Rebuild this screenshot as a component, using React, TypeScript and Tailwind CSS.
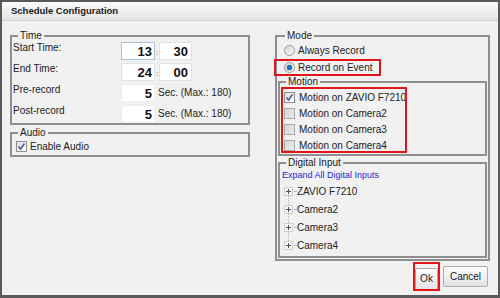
import React from 'react';

const Check = ({ checked = false, disabled = false }: { checked?: boolean; disabled?: boolean }) => (
  <span
    className={`inline-flex items-center justify-center w-[11px] h-[11px] border shrink-0 ${
      disabled
        ? 'border-[#a9a9a9] bg-gradient-to-br from-[#d4d4d4] to-[#ececec]'
        : 'border-[#8e8f8f] bg-gradient-to-br from-[#dcdcdc] to-[#ffffff]'
    }`}
  >
    {checked && (
      <svg width="9" height="9" viewBox="0 0 9 9">
        <path d="M1.5 4.5 L3.5 7 L7.5 1.5" fill="none" stroke="#4a5d8c" strokeWidth="1.6" />
      </svg>
    )}
  </span>
);

const Radio = ({ checked = false }: { checked?: boolean }) => (
  <span className="inline-flex items-center justify-center w-[11px] h-[11px] rounded-full border border-[#9a9a9a] bg-gradient-to-br from-[#d6d6d6] to-[#fafafa] shrink-0">
    {checked && <span className="w-[5px] h-[5px] rounded-full bg-[#1d6fb8] shadow-[0_0_1px_#0a3d70]" />}
  </span>
);

const TreeItem = ({ label, last = false }: { label: string; last?: boolean }) => (
  <div className="relative flex items-center h-[18px] pl-[4px]">
    {!last && <span className="absolute left-[8px] top-[13px] h-[14px] border-l border-dotted border-[#b5b5b5]" />}
    <svg width="9" height="9" viewBox="0 0 9 9" className="shrink-0">
      <rect x="0.5" y="0.5" width="8" height="8" fill="#f7f7f7" stroke="#d0d0d0" />
      <path d="M2 4.5 H7 M4.5 2 V7" stroke="#505050" strokeWidth="1" />
    </svg>
    <span className="w-[2px] border-t border-dotted border-[#b5b5b5] mx-[1px]" />
    <span className="text-[10px] text-[#222]">{label}</span>
  </div>
);

const fieldsetCls = 'border-2 border-[#8f8f8f] min-w-0';
const legendCls = 'ml-[6px] px-[2px] text-[10px] leading-[12px] text-[#222]';

const TimeRow = ({ label, a, b }: { label: string; a: string; b: string }) => (
  <div className="flex items-start h-[18px]">
    <span className="w-[108px] text-[10px] leading-[12px] text-[#222]">{label}</span>
    <span className={`w-[34px] h-[18px] bg-white border ${label === 'Start Time:' ? 'border-[#a9c3dc]' : 'border-[#e2e2e2]'} text-right pr-[2px] text-[13px] font-bold leading-[17px] text-[#111]`}>
      {a}
    </span>
    <span className="w-[4px] text-[8px] leading-[22px] text-center text-[#555]">:</span>
    <span className="w-[33px] h-[18px] bg-white border border-[#e2e2e2] text-right pr-[3px] text-[13px] font-bold leading-[17px] text-[#111]">
      {b}
    </span>
  </div>
);

const SecRow = ({ label }: { label: string }) => (
  <div className="flex items-start h-[18px]">
    <span className="w-[108px] text-[10px] leading-[12px] text-[#222]">{label}</span>
    <span className="w-[34px] h-[18px] bg-white border border-[#efefef] text-right pr-[2px] text-[13px] font-bold leading-[17px] text-[#111]">
      5
    </span>
    <span className="ml-[3px] text-[10px] leading-[18px] text-[#222]">Sec. (Max.: 180)</span>
  </div>
);

export default function App() {
  return (
    <div
      className="w-[500px] h-[298px] border-2 border-b-[3px] border-[#5a5a5a] bg-[#f1f1f1] flex flex-col overflow-hidden"
      style={{ fontFamily: '"Liberation Sans", Arial, sans-serif' }}
    >
      {/* Title bar */}
      <div className="h-[19px] shrink-0 bg-gradient-to-b from-[#fbfbfb] to-[#e4e4e4] border-b border-[#d2d2d2] pl-[9px] flex items-center">
        <span className="text-[9.5px] font-bold text-[#1a1a1a]">Schedule Configuration</span>
      </div>

      <div className="flex pt-[9px] pl-[8px] pr-[8px]">
        {/* Left column */}
        <div className="w-[240px] flex flex-col gap-[2px]">
          <fieldset className={fieldsetCls}>
            <legend className={legendCls}>Time</legend>
            <div className="flex flex-col gap-[3px] pl-[1px]">
              <TimeRow label="Start Time:" a="13" b="30" />
              <TimeRow label="End Time:" a="24" b="00" />
              <SecRow label="Pre-record" />
              <SecRow label="Post-record" />
            </div>
          </fieldset>

          <fieldset className={fieldsetCls}>
            <legend className={legendCls}>Audio</legend>
            <div className="flex items-center gap-[3px] pl-[4px] h-[15px] mb-[1px]">
              <Check checked />
              <span className="text-[10px] text-[#222]">Enable Audio</span>
            </div>
          </fieldset>
        </div>

        {/* Right column */}
        <div className="w-[215px] ml-[25px] flex flex-col">
          <fieldset className={`${fieldsetCls} px-[1px] pb-[1px]`}>
            <legend className={`${legendCls} ml-[7px]`}>Mode</legend>
            <div className="flex items-center gap-[3px] h-[17px] pl-[6px]">
              <Radio />
              <span className="text-[10px] text-[#222]">Always Record</span>
            </div>
            <div className="relative flex items-center gap-[3px] h-[17px] pl-[6px]">
              <Radio checked />
              <span className="text-[10px] text-[#222]">Record on Event</span>
              <span className="absolute left-[-4px] top-0 w-[107px] h-[17px] border-2 border-[#e0161b]" />
            </div>

            <fieldset className={fieldsetCls}>
              <legend className={legendCls}>Motion</legend>
              <div className="relative flex flex-col h-[66px] pt-[1px] pl-[3px]">
                <div className="flex items-center gap-[4px] h-[16.5px] pl-[1px]">
                  <Check checked />
                  <span className="text-[10px] text-[#222]">Motion on ZAVIO F7210</span>
                </div>
                <div className="flex items-center gap-[4px] h-[16.5px] pl-[1px]">
                  <Check disabled />
                  <span className="text-[10px] text-[#222]">Motion on Camera2</span>
                </div>
                <div className="flex items-center gap-[4px] h-[16.5px] pl-[1px]">
                  <Check disabled />
                  <span className="text-[10px] text-[#222]">Motion on Camera3</span>
                </div>
                <div className="flex items-center gap-[4px] h-[16.5px] pl-[1px]">
                  <Check disabled />
                  <span className="text-[10px] text-[#222]">Motion on Camera4</span>
                </div>
                <span className="absolute left-[1px] top-[-1px] w-[126px] h-[66px] border-2 border-[#e0161b]" />
              </div>
            </fieldset>

            <fieldset className={`${fieldsetCls} mt-[1px] pb-[2px]`}>
              <legend className={legendCls}>Digital Input</legend>
              <div className="h-[13px] pl-[2px] text-[9px] leading-[13px] text-[#2727d0]">Expand All Digital Inputs</div>
              <TreeItem label="ZAVIO F7210" />
              <TreeItem label="Camera2" />
              <TreeItem label="Camera3" />
              <TreeItem label="Camera4" last />
            </fieldset>
          </fieldset>

          <div className="flex justify-end gap-[5px] mt-[4px] pr-[2px]">
            <div className="relative">
              <button className="w-[23px] h-[22px] border border-[#acacac] rounded-[2px] bg-gradient-to-b from-[#fdfdfd] to-[#e3e3e3] text-[10px] text-[#222]">
                Ok
              </button>
              <span className="absolute left-[-2px] top-[-3px] w-[27px] h-[29px] border-2 border-[#e0161b]" />
            </div>
            <button className="w-[45px] h-[21px] mt-[1px] border border-[#acacac] rounded-[2px] bg-gradient-to-b from-[#fdfdfd] to-[#e3e3e3] text-[10px] text-[#222]">
              Cancel
            </button>
          </div>
        </div>
      </div>
    </div>
  );
}
